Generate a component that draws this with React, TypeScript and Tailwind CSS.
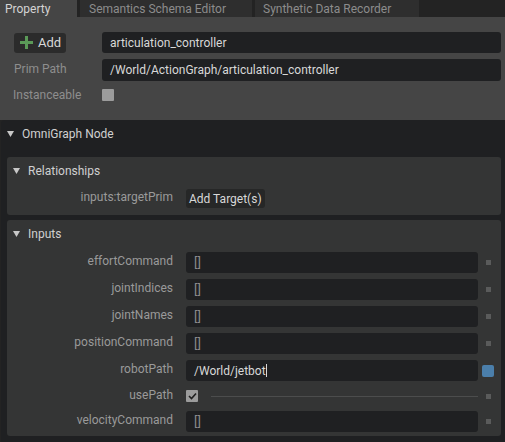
import { ReactNode } from "react";

function Triangle() {
  return (
    <svg width="7" height="6" viewBox="0 0 7 6" className="shrink-0">
      <path d="M0 0 H7 L3.5 6 Z" fill="#c8c8c8" />
    </svg>
  );
}

function ArrayField({ value }: { value: string }) {
  return (
    <div className="h-[21px] w-[292px] rounded-[3px] bg-[#1f2022] pl-[8px] flex items-center text-[#8a8a8a] text-[13px]">
      {value}
    </div>
  );
}

function Dot({ active }: { active?: boolean }) {
  if (active) {
    return <div className="ml-[4px] w-[12px] h-[12px] rounded-[2px] bg-[#4b7fab]" />;
  }
  return (
    <div className="ml-[4px] w-[12px] h-[12px] flex items-center justify-center">
      <div className="w-[5px] h-[5px] bg-[#5a5b5b]" />
    </div>
  );
}

function Row({ label, children, active }: { label: string; children: ReactNode; active?: boolean }) {
  return (
    <div className="flex items-center h-[21px]">
      <div className="w-[166px] text-right text-[#9a9a9a] -mt-[3px]">{label}</div>
      <div className="ml-[13px] flex items-center">{children}</div>
      <Dot active={active} />
    </div>
  );
}

export default function App() {
  return (
    <div
      className="w-[505px] h-[442px] bg-[#232323] overflow-hidden text-[12px] leading-none"
      style={{ fontFamily: "Roboto, 'Noto Sans', sans-serif" }}
    >
      {/* tabs */}
      <div className="flex h-[17px] bg-[#232323]">
        <div className="w-[77px] bg-[#454545] text-[#d4d4d4] pl-[5px] pt-[3px]">Property</div>
        <div className="ml-[3px] w-[172px] bg-[#2e2e2e] text-[#8c8c8c] pl-[9px] pt-[3px]">Semantics Schema Editor</div>
        <div className="ml-[3px] w-[164px] bg-[#2e2e2e] text-[#8c8c8c] pl-[8px] pt-[3px]">Synthetic Data Recorder</div>
      </div>

      {/* top section */}
      <div className="bg-[#454545] h-[103px] pt-[15px] pl-[13px] pr-[4px]">
        <div className="flex items-center">
          <div className="w-[52px] h-[20px] ml-[1px] rounded-[3px] bg-[#2b2b2b] flex items-center pl-[6px] text-[#d8d8d8] text-[13px]">
            <svg width="13" height="13" viewBox="0 0 13 13" className="mr-[5px]">
              <path d="M5 0 H8 V5 H13 V8 H8 V13 H5 V8 H0 V5 H5 Z" fill="#5b9a58" />
            </svg>
            Add
          </div>
          <div className="ml-[36px] flex-1 h-[21px] rounded-[3px] bg-[#1f2022] text-[#d8d8d8] flex items-center pl-[8px]">
            articulation_controller
          </div>
        </div>
        <div className="flex items-center mt-[6px]">
          <div className="w-[89px] text-[#8e8e8e] pl-[1px] -mt-[3px]">Prim Path</div>
          <div className="flex-1 h-[22px] rounded-[3px] bg-[#1f2022] text-[#d8d8d8] flex items-center pl-[8px]">
            /World/ActionGraph/articulation_controller
          </div>
        </div>
        <div className="flex items-center mt-[8px]">
          <div className="w-[89px] text-[#8e8e8e]">Instanceable</div>
          <div className="w-[12px] h-[12px] rounded-[1px] bg-[#9c9c9c]" />
        </div>
      </div>

      {/* OmniGraph Node frame */}
      <div className="ml-[1px] rounded-tl-[4px] bg-[#1f2022] h-[322px] pt-[9px]">
        <div className="flex items-center gap-[8px] pl-[6px] h-[10px] text-[#d0d0d0]">
          <Triangle />
          <span>OmniGraph Node</span>
        </div>

        <div className="ml-[6px] mr-[4px] mt-[18px] rounded-[3px] bg-[#343535] h-[58px] pt-[9px]">
          <div className="flex items-center gap-[8px] pl-[6px] h-[10px] text-[#d0d0d0]">
            <Triangle />
            <span>Relationships</span>
          </div>
          <div className="flex items-center mt-[13px]">
            <div className="w-[166px] text-right text-[#9a9a9a] -mt-[3px]">inputs:targetPrim</div>
            <div className="ml-[13px] h-[19px] px-[3px] rounded-[3px] bg-[#262727] text-[#d8d8d8] flex items-center">
              Add Target(s)
            </div>
          </div>
        </div>

        <div className="ml-[6px] mr-[4px] mt-[5px] rounded-[3px] bg-[#343535] h-[216px] pt-[9px]">
          <div className="flex items-center gap-[8px] pl-[6px] h-[10px] text-[#d0d0d0]">
            <Triangle />
            <span>Inputs</span>
          </div>
          <div className="mt-[13px] flex flex-col gap-[6px]">
            <Row label="effortCommand"><ArrayField value="[]" /></Row>
            <Row label="jointIndices"><ArrayField value="[]" /></Row>
            <Row label="jointNames"><ArrayField value="[]" /></Row>
            <Row label="positionCommand"><ArrayField value="[]" /></Row>
            <Row label="robotPath" active>
              <div className="h-[21px] w-[292px] rounded-[3px] bg-[#1f2022] pl-[8px] flex items-center text-[#d8d8d8]">
                /World/jetbot<span className="w-px h-[13px] bg-[#d8d8d8]" />
              </div>
            </Row>
            <div className="flex items-center h-[18px]">
              <div className="w-[166px] text-right text-[#9a9a9a] -mt-[3px]">usePath</div>
              <div className="ml-[13px] w-[12px] h-[12px] rounded-[1px] bg-[#9c9c9c] flex items-center justify-center">
                <svg width="9" height="8" viewBox="0 0 9 8">
                  <path d="M1 4 L3.5 6.5 L8 1.5" stroke="#1f1f1f" strokeWidth="1.6" fill="none" />
                </svg>
              </div>
              <div className="ml-[13px] w-[267px] h-px bg-[#4c4d4d]" />
              <Dot />
            </div>
            <Row label="velocityCommand"><ArrayField value="[]" /></Row>
          </div>
        </div>
      </div>
    </div>
  );
}
